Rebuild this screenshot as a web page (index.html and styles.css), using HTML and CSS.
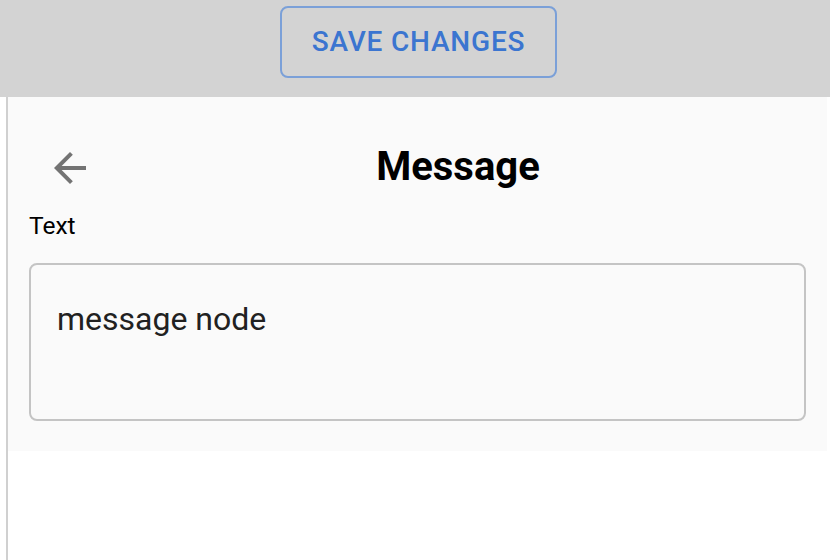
FILE: index.html
```html
<!DOCTYPE html>
<html>
<head>
<meta charset="utf-8">
<link rel="stylesheet" href="styles.css">
</head>
<body>
<div class="toolbar">
  <button class="save-btn">Save changes</button>
</div>
<div class="main">
  <div class="panel">
    <div class="header">
      <button class="icon-btn" aria-label="back">
        <svg viewBox="0 0 24 24" width="48" height="48"><path d="M20 11H7.83l5.59-5.59L12 4l-8 8 8 8 1.41-1.41L7.83 13H20v-2z"/></svg>
      </button>
      <div class="title">Message</div>
    </div>
    <div class="label">Text</div>
    <div class="field">
      <div class="field-text">message node</div>
    </div>
  </div>
</div>
</body>
</html>
```
FILE: styles.css
```css
html, body {
  margin: 0;
  padding: 0;
  background: #ffffff;
  font-family: Roboto, "Liberation Sans", sans-serif;
}

.toolbar {
  height: 97px;
  box-sizing: border-box;
  background: #d3d3d3;
  display: flex;
  justify-content: center;
  align-items: flex-start;
  padding-top: 6px;
  padding-left: 7px;
}

.save-btn {
  font-family: Roboto, "Liberation Sans", sans-serif;
  font-weight: 500;
  font-size: 28px;
  line-height: 48px;
  letter-spacing: 0.8px;
  text-transform: uppercase;
  color: #3b75d0;
  background: transparent;
  border: 2px solid #7ba0d8;
  border-radius: 8px;
  padding: 10px 30px;
  margin: 0;
}

.main {
  margin-left: 6px;
  border-left: 2px solid #d0d0d0;
  height: 463px;
  box-sizing: border-box;
  padding-right: 3px;
}

.panel {
  background: #fafafa;
  padding: 31px 21px 30px 21px;
}

.header {
  display: flex;
  align-items: center;
  height: 80px;
}

.icon-btn {
  width: 80px;
  height: 80px;
  padding: 16px;
  border: none;
  background: transparent;
  margin: 0 0 0 1px;
  box-sizing: border-box;
  display: flex;
}

.icon-btn svg {
  fill: #737373;
  display: block;
}

.title {
  flex: 1;
  text-align: center;
  font-size: 40px;
  font-weight: 700;
  line-height: 60px;
  color: #000;
  margin-top: -3px;
}

.label {
  font-size: 24.5px;
  line-height: 36px;
  color: #000;
  margin-bottom: 19px;
}

.field {
  border: 2px solid #c4c4c4;
  border-radius: 8px;
  padding: 31px 26px;
  height: 92px;
}

.field-text {
  font-size: 32px;
  line-height: 46px;
  color: #212121;
}
```
